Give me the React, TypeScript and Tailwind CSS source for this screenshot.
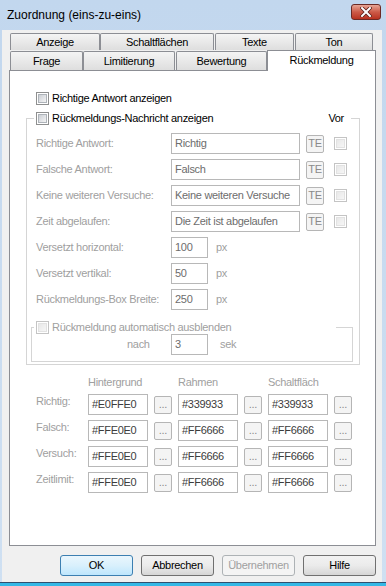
import React from 'react';

type CbProps = { disabled?: boolean };

function Checkbox({ disabled }: CbProps) {
    return (
        <span
            className={
                'flex h-[13px] w-[13px] shrink-0 items-center justify-center border bg-white ' +
                (disabled ? 'border-[#c4c4c4]' : 'border-[#8e8f8f]')
            }
        >
            <span
                className={
                    'h-[9px] w-[9px] border ' +
                    (disabled
                        ? 'border-[#e2e2e2] bg-gradient-to-br from-[#e8e8e8] to-[#f6f6f6]'
                        : 'border-[#aeb3b9] bg-gradient-to-br from-[#cbcfd5] to-[#f4f4f4]')
                }
            />
        </span>
    );
}

function Tab({ label, w, ml = 0 }: { label: string; w: number; ml?: number }) {
    return (
        <div
            className="flex h-full items-center justify-center rounded-t-[2px] border border-b-0 border-[#8c8e94] bg-gradient-to-b from-[#f4f4f4] to-[#dedede] text-black"
            style={{ width: w, marginLeft: ml }}
        >
            {label}
        </div>
    );
}

function TextField({ value, w, dark }: { value: string; w: number; dark?: boolean }) {
    return (
        <div
            className={
                'flex h-[21px] shrink-0 items-center overflow-hidden whitespace-nowrap border border-[#b8b8b8] bg-white pl-[3px] ' +
                (dark ? 'text-[#3c3c3c]' : 'text-[#6d6d6d]')
            }
            style={{ width: w }}
        >
            {value}
        </div>
    );
}

function SmallButton({ label }: { label: string }) {
    return (
        <div className="flex h-[18px] w-[18px] shrink-0 items-center justify-center rounded-[2px] border border-[#b5b5b5] bg-[#f4f4f4] text-[#8a8a8a]">
            {label}
        </div>
    );
}

function TextRow({ label, value }: { label: string; value: string }) {
    return (
        <div className="flex h-[21px] items-center">
            <span className="w-[135px] text-[#a0a0a0]">{label}</span>
            <TextField value={value} w={129} />
            <span className="ml-[6px]">
                <SmallButton label="TE" />
            </span>
            <span className="ml-[10px]">
                <Checkbox disabled />
            </span>
        </div>
    );
}

function PxRow({ label, value, unit = 'px' }: { label: string; value: string; unit?: string }) {
    return (
        <div className="flex h-[21px] items-center">
            <span className="w-[135px] text-[#a0a0a0]">{label}</span>
            <TextField value={value} w={37} />
            <span className="ml-[8px] text-[#a0a0a0]">{unit}</span>
        </div>
    );
}

function DlgButton({ label, primary, disabled }: { label: string; primary?: boolean; disabled?: boolean }) {
    let cls = 'border-[#707070] bg-gradient-to-b from-[#f2f2f2] via-[#ebebeb] to-[#d6d6d6] text-black';
    if (primary) cls = 'border-[#3c7fb1] bg-gradient-to-b from-[#eaf6fd] via-[#d9f0fc] to-[#bee6fd] text-black';
    if (disabled) cls = 'border-[#adb2b5] bg-[#f4f4f4] text-[#a0a0a0]';
    return (
        <div className={'flex h-[21px] w-[73px] items-center justify-center rounded-[3px] border ' + cls}>
            {label}
        </div>
    );
}

const colorRows = [
    { label: 'Richtig:', values: ['#E0FFE0', '#339933', '#339933'] },
    { label: 'Falsch:', values: ['#FFE0E0', '#FF6666', '#FF6666'] },
    { label: 'Versuch:', values: ['#FFE0E0', '#FF6666', '#FF6666'] },
    { label: 'Zeitlimit:', values: ['#FFE0E0', '#FF6666', '#FF6666'] },
];

export default function App() {
    return (
        <div className="flex h-[586px] w-[386px] flex-col bg-gradient-to-b from-[#c2d7ee] to-[#cfe0f2] font-['Liberation_Sans',Arial,sans-serif] text-[11px] leading-[13px] tracking-[-0.3px]">
            {/* title bar */}
            <div className="flex h-[30px] items-center justify-between pl-[7px] pr-[5px]">
                <span className="text-[12px] tracking-normal text-black">Zuordnung (eins-zu-eins)</span>
                <div className="mb-[7px] flex h-[16px] w-[30px] items-center justify-center rounded-[3px] border border-[#6b2a25] bg-gradient-to-b from-[#e6a595] via-[#cc5a48] to-[#b8311f]">
                    <svg width="12" height="10" viewBox="0 0 12 10">
                        <path d="M2 1 L10 9 M10 1 L2 9" stroke="#5b1f18" strokeWidth="3.6" strokeLinecap="square" />
                        <path d="M2 1 L10 9 M10 1 L2 9" stroke="#ffffff" strokeWidth="2" strokeLinecap="square" />
                    </svg>
                </div>
            </div>

            {/* client */}
            <div className="ml-[2px] mr-[4px] flex flex-1 flex-col bg-[#f0f0f0] pt-[3px]">
                {/* tab rows */}
                <div className="ml-[8px] flex h-[17px]">
                    <Tab label="Anzeige" w={90} />
                    <Tab label="Schaltflächen" w={114} />
                    <Tab label="Texte" w={79} ml={1} />
                    <Tab label="Ton" w={78} ml={1} />
                </div>
                <div className="ml-[8px] flex h-[20px] items-end">
                    <div className="flex h-[19px]">
                        <Tab label="Frage" w={73} />
                        <Tab label="Limitierung" w={92} />
                        <Tab label="Bewertung" w={91} ml={1} />
                    </div>
                    <div className="relative z-10 -mb-px flex h-[21px] w-[109px] items-start justify-center border border-b-0 border-[#8c8e94] bg-white pt-[3px] text-black">
                        Rückmeldung
                    </div>
                </div>

                {/* tab panel */}
                <div className="ml-[7px] flex h-[476px] w-[367px] flex-col border border-[#8c8e94] bg-white pt-[21px]">
                    <div className="ml-[26px] flex items-center gap-[3px] text-black">
                        <Checkbox />
                        <span>Richtige Antwort anzeigen</span>
                    </div>

                    <fieldset className="ml-[16px] mt-[7px] w-[334px] border border-[#d5d5d5] pb-[2px]">
                        <legend className="ml-[7px] w-[317px] px-[2px]">
                            <div className="flex items-center">
                                <Checkbox />
                                <span className="ml-[3px] text-black">Rückmeldungs-Nachricht anzeigen</span>
                                <span className="ml-auto mr-[5px] text-black">Vor</span>
                            </div>
                        </legend>
                        <div className="flex flex-col gap-[5px] pl-[9px] pt-[8px]">
                            <TextRow label="Richtige Antwort:" value="Richtig" />
                            <TextRow label="Falsche Antwort:" value="Falsch" />
                            <TextRow label="Keine weiteren Versuche:" value="Keine weiteren Versuche" />
                            <TextRow label="Zeit abgelaufen:" value="Die Zeit ist abgelaufen" />
                            <PxRow label="Versetzt horizontal:" value="100" />
                            <PxRow label="Versetzt vertikal:" value="50" />
                            <PxRow label="Rückmeldungs-Box Breite:" value="250" />
                        </div>

                        <fieldset className="ml-[4px] mt-[11px] w-[322px] border border-[#d5d5d5] pb-[6px]">
                            <legend className="ml-[2px] w-[302px] px-[2px]">
                                <div className="flex items-center">
                                    <Checkbox disabled />
                                    <span className="ml-[3px] text-[#a0a0a0]">Rückmeldung automatisch ausblenden</span>
                                </div>
                            </legend>
                            <div className="flex h-[21px] items-center pl-[95px] pt-0">
                                <span className="w-[44px] text-[#a0a0a0]">nach</span>
                                <TextField value="3" w={37} />
                                <span className="ml-[12px] text-[#a0a0a0]">sek</span>
                            </div>
                        </fieldset>
                    </fieldset>

                    {/* colours */}
                    <div className="ml-[26px] mt-[11px] flex flex-col">
                        <div className="flex text-[#a0a0a0]">
                            <span className="w-[52px]" />
                            <span className="w-[90px]">Hintergrund</span>
                            <span className="w-[90px]">Rahmen</span>
                            <span className="w-[90px]">Schaltfläch</span>
                        </div>
                        <div className="mt-[5px] flex flex-col gap-[5px]">
                            {colorRows.map((row) => (
                                <div key={row.label} className="flex h-[21px] items-start">
                                    <span className="w-[52px] pt-[1px] text-[#a0a0a0]">{row.label}</span>
                                    {row.values.map((v, i) => (
                                        <div key={i} className="flex w-[90px] items-center">
                                            <TextField value={v} w={60} dark />
                                            <span className="ml-[6px]">
                                                <SmallButton label="..." />
                                            </span>
                                        </div>
                                    ))}
                                </div>
                            ))}
                        </div>
                    </div>
                </div>

                {/* dialog buttons */}
                <div className="mr-[6px] mt-[9px] flex justify-end gap-[8px]">
                    <DlgButton label="OK" primary />
                    <DlgButton label="Abbrechen" />
                    <DlgButton label="Übernehmen" disabled />
                    <DlgButton label="Hilfe" />
                </div>
            </div>
            <div className="h-[4px] border-t border-[#2f4f6f] bg-[#34b8e6]" />
        </div>
    );
}
